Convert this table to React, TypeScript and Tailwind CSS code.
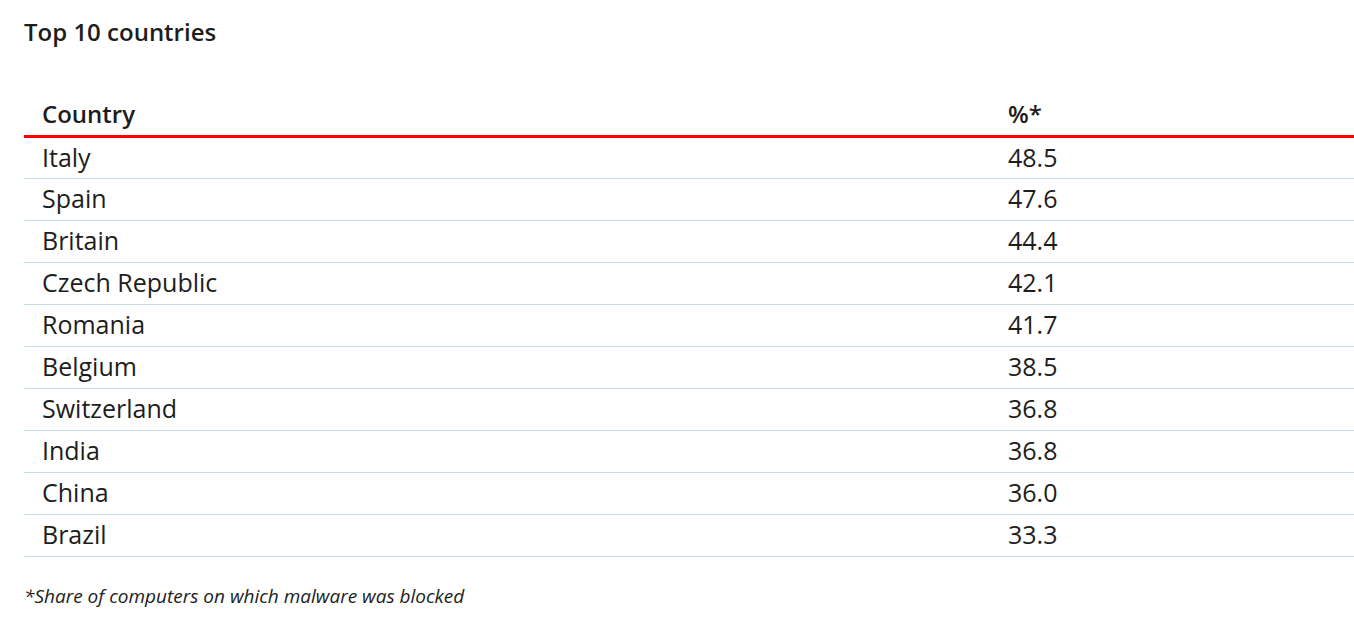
const rows = [
  { country: 'Italy', value: '48.5' },
  { country: 'Spain', value: '47.6' },
  { country: 'Britain', value: '44.4' },
  { country: 'Czech Republic', value: '42.1' },
  { country: 'Romania', value: '41.7' },
  { country: 'Belgium', value: '38.5' },
  { country: 'Switzerland', value: '36.8' },
  { country: 'India', value: '36.8' },
  { country: 'China', value: '36.0' },
  { country: 'Brazil', value: '33.3' },
]

export default function App() {
  return (
    <div
      className="min-h-screen bg-white pl-6 text-[#1d1d1b]"
      style={{ fontFamily: '"Open Sans", sans-serif' }}
    >
      {/* Heading */}
      <h2 className="pt-[16px] text-[24px] font-semibold leading-[32px]">Top 10 countries</h2>

      {/* Table */}
      <table className="mt-[46px] w-full border-collapse text-[25px]">
        <thead>
          <tr className="border-b-[3px] border-[#ff0000]">
            <th className="w-[966px] h-[42px] pl-[18px] text-left text-[24px] font-semibold">Country</th>
            <th className="h-[42px] pl-[18px] text-left text-[24px] font-semibold">%*</th>
          </tr>
        </thead>
        <tbody>
          {rows.map((row) => (
            <tr key={row.country} className="border-b border-[#c5dfe4]">
              <td className="h-[42px] pl-[18px]">{row.country}</td>
              <td className="h-[42px] pl-[18px]">{row.value}</td>
            </tr>
          ))}
        </tbody>
      </table>

      {/* Footnote */}
      <p className="mt-[25px] text-[19px] italic">*Share of computers on which malware was blocked</p>
    </div>
  )
}
